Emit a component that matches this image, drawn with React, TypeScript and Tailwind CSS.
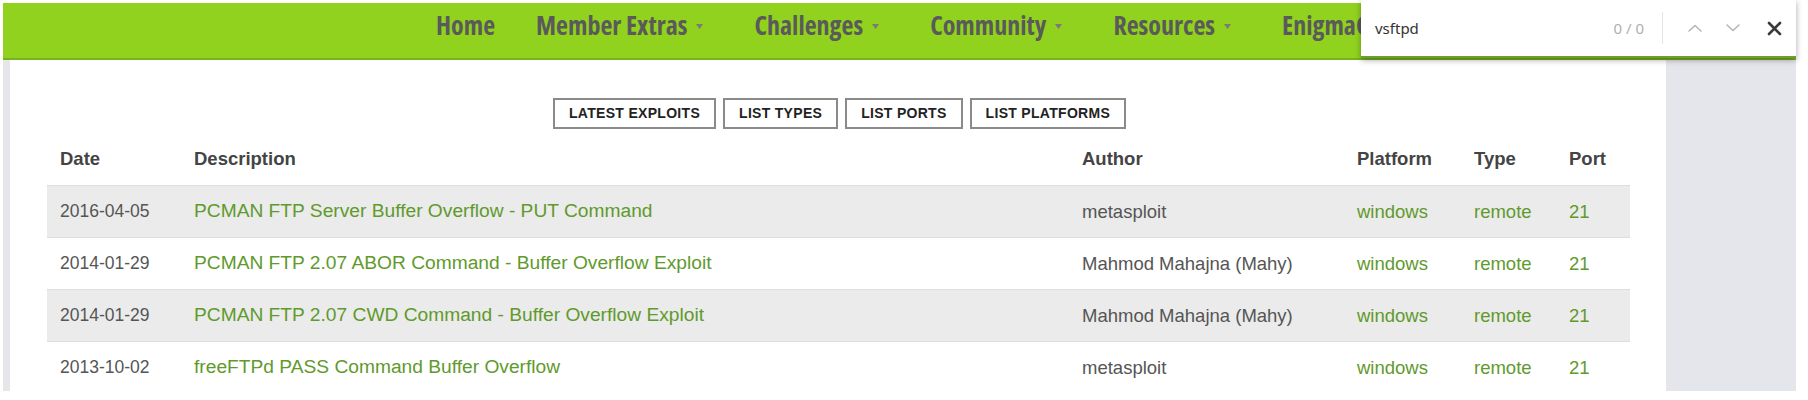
import React from "react";

type Row = {
  date: string;
  title: string;
  author: string;
  platform: string;
  type: string;
  port: string;
};

const rows: Row[] = [
  { date: "2016-04-05", title: "PCMAN FTP Server Buffer Overflow - PUT Command", author: "metasploit", platform: "windows", type: "remote", port: "21" },
  { date: "2014-01-29", title: "PCMAN FTP 2.07 ABOR Command - Buffer Overflow Exploit", author: "Mahmod Mahajna (Mahy)", platform: "windows", type: "remote", port: "21" },
  { date: "2014-01-29", title: "PCMAN FTP 2.07 CWD Command - Buffer Overflow Exploit", author: "Mahmod Mahajna (Mahy)", platform: "windows", type: "remote", port: "21" },
  { date: "2013-10-02", title: "freeFTPd PASS Command Buffer Overflow", author: "metasploit", platform: "windows", type: "remote", port: "21" },
];

const navItems: { label: string; caret: boolean }[] = [
  { label: "Home", caret: false },
  { label: "Member Extras", caret: true },
  { label: "Challenges", caret: true },
  { label: "Community", caret: true },
  { label: "Resources", caret: true },
  { label: "EnigmaGroup", caret: false },
];

const buttons = ["LATEST EXPLOITS", "LIST TYPES", "LIST PORTS", "LIST PLATFORMS"];

const cols = "grid grid-cols-[134px_888px_275px_117px_95px_74px]";

function Caret() {
  return (
    <svg className="ml-[9px] mr-[10px] mt-[3px]" width="7" height="5" viewBox="0 0 7 5">
      <path d="M0 0 L7 0 L3.5 5 Z" fill="#7a7a7a" />
    </svg>
  );
}

function Chevron({ up }: { up: boolean }) {
  return (
    <svg width="16" height="10" viewBox="0 0 16 10" fill="none">
      <path
        d={up ? "M2 8 L8 2.5 L14 8" : "M2 2 L8 7.5 L14 2"}
        stroke="#b5b5b5"
        strokeWidth="1.6"
        strokeLinecap="round"
        strokeLinejoin="round"
      />
    </svg>
  );
}

function FindBar() {
  return (
    <div className="absolute left-[1361px] top-0 flex h-[58px] w-[435px] items-center border-b-2 border-[#6f9d35] bg-white shadow-[0_2px_6px_rgba(0,0,0,0.35)] [font-family:'Noto_Sans','Open_Sans',sans-serif]">
      <span className="ml-[14px] text-[15px] text-[#333]">vsftpd</span>
      <span className="ml-auto text-[15px] text-[#b0b0b0]">0 / 0</span>
      <span className="ml-[18px] h-[32px] w-px bg-[#e3e3e3]" />
      <span className="ml-[24px] flex">
        <Chevron up />
      </span>
      <span className="ml-[22px] flex">
        <Chevron up={false} />
      </span>
      <span className="ml-[26px] mr-[14px] flex">
        <svg width="15" height="15" viewBox="0 0 15 15">
          <path d="M2 2 L13 13 M13 2 L2 13" stroke="#3a3a3a" strokeWidth="2.6" strokeLinecap="round" />
        </svg>
      </span>
    </div>
  );
}

export default function App() {
  return (
    <div className="relative h-[400px] w-[1808px] overflow-hidden bg-white pl-[3px] pt-[3px] pr-[12px]">
      {/* site navigation bar; the menu is clipped where the find bar sits over it */}
      <nav className="h-[57px] border-b-2 border-[#79b21c] bg-[#91d21f] [font-family:'Open_Sans',sans-serif] font-stretch-condensed">
        <div className="flex h-full w-[1358px] items-center gap-[41px] overflow-hidden pb-[12px] pl-[433px]">
          {navItems.map((item) => (
            <span key={item.label} className="flex shrink-0 items-center whitespace-nowrap text-[26px] font-bold leading-none text-[#5a5a5a]">
              {item.label}
              {item.caret && <Caret />}
            </span>
          ))}
        </div>
      </nav>

      <div className="flex h-[331px]">
        <div className="w-[7px] bg-[#e4e6ea]" />

        <main className="flex-1 bg-white pl-[37px] pr-[36px] pt-[38px] [font-family:'Liberation_Sans',Arial,sans-serif]">
          <div className="ml-[506px] flex gap-[7px]">
            {buttons.map((b) => (
              <button
                key={b}
                className="h-[31px] border-2 border-[#8a8a8a] bg-white px-[14px] text-[14px] font-bold tracking-[0.3px] text-[#222]"
              >
                {b}
              </button>
            ))}
          </div>

          <div className={`${cols} mt-[4px] h-[52px] items-center text-[18.5px] font-bold text-[#444]`}>
            <span className="pl-[13px]">Date</span>
            <span className="pl-[13px]">Description</span>
            <span className="pl-[13px]">Author</span>
            <span className="pl-[13px]">Platform</span>
            <span className="pl-[13px]">Type</span>
            <span className="pl-[13px]">Port</span>
          </div>

          {rows.map((r, i) => (
            <div
              key={i}
              className={`${cols} h-[52px] items-center border-t border-[#dedede] text-[18.5px] ${i % 2 === 0 ? "bg-[#ebebeb]" : "bg-white"}`}
            >
              <span className="pl-[13px] text-[17.5px] text-[#555]">{r.date}</span>
              <span className="pl-[13px] text-[19.2px] text-[#5f9a2c]">{r.title}</span>
              <span className="pl-[13px] text-[#555]">{r.author}</span>
              <span className="pl-[13px] text-[#5f9a2c]">{r.platform}</span>
              <span className="pl-[13px] text-[#5f9a2c]">{r.type}</span>
              <span className="pl-[13px] text-[#5f9a2c]">{r.port}</span>
            </div>
          ))}
        </main>

        <aside className="w-[130px] bg-[#e4e6ec]" />
      </div>

      <FindBar />
    </div>
  );
}
